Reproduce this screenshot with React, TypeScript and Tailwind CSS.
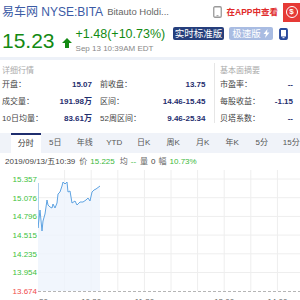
import React from 'react';

const tabs = ['分时', '5日', '年线', 'YTD', '日K', '周K', '月K', '年K', '5分', '15分'];

const quoteRows = [
  { a: '开盘：', av: '15.07', b: '前收盘：', bv: '13.75' },
  { a: '成交量：', av: '191.98万', b: '区间：', bv: '14.46-15.45' },
  { a: '10日均量：', av: '83.61万', b: '52周区间：', bv: '9.46-25.34' },
];

const basicRows = [
  { k: '市盈率：', v: '--' },
  { k: '每股收益：', v: '-1.15' },
  { k: '贝塔系数：', v: '--' },
];

const yTicks = ['15.357', '15.076', '14.796', '14.515', '14.235', '13.954', '13.674'];

// intraday points, already in plot coordinates
const pts: [number, number][] = [
  [0, 13], [0, 58], [2, 40], [4, 61], [5, 51], [7, 44], [9, 30], [10, 35], [12, 37],
  [14, 38], [15, 34], [17, 38], [19, 33], [20, 24], [22, 22], [24, 16], [25, 12],
  [27, 14], [29, 12], [30, 22], [32, 21], [34, 33], [37, 31], [39, 35], [42, 32],
  [45, 32], [48, 30], [50, 28], [52, 31], [54, 22], [56, 20], [58, 19], [62, 16],
];

const gridY = [9, 27.7, 46.4, 65.1, 83.8, 102.5];
const gridX = [26.6, 53.2, 79.8, 106.4, 133, 159.6, 186.2, 212.8, 239.4];
const xLabels: [string, number][] = [['09:30', 0], ['10:30', 53.2], ['11:30', 106.4], ['13:00', 186.2], ['14:00', 239.4]];

function PhoneIcon({ color, filled }: { color: string; filled?: boolean }) {
  return (
    <svg width="9" height="12" viewBox="0 0 9 12">
      <rect x="0.75" y="0.75" width="7.5" height="10.5" rx="1.2" fill={filled ? color : 'none'} stroke={color} strokeWidth="1.3" />
      {filled ? <rect x="2" y="2" width="5" height="6.5" fill="#fff" /> : null}
      <rect x="3.5" y="9.2" width="2" height="1" fill={filled ? '#fff' : color} />
    </svg>
  );
}

function IntradayChart() {
  const line = pts.map(([x, y]) => `${x},${y}`).join(' ');
  const area = `${line} 62,121 0,121`;
  return (
    <svg width="262" height="130" className="block">
      {gridY.map((y) => (
        <line key={y} x1="0" x2="262" y1={y} y2={y} stroke="#eeeeee" strokeWidth="1" />
      ))}
      {gridX.map((x) => (
        <line key={x} x1={x} x2={x} y1="0" y2="121" stroke="#eeeeee" strokeWidth="1" />
      ))}
      <polygon points={area} fill="#eef4fc" opacity="0.8" />
      <polyline points={line} fill="none" stroke="#5ea3e2" strokeWidth="1" />
      <line x1="0" x2="262" y1="121.5" y2="121.5" stroke="#b5b5b5" strokeWidth="1" strokeDasharray="3 2" />
      {xLabels.map(([t, x]) => (
        <text key={t} x={x} y="134" textAnchor="middle" fontSize="8" fill="#666" fontFamily="Liberation Sans, sans-serif">
          {t}
        </text>
      ))}
    </svg>
  );
}

export default function App() {
  return (
    <div className="w-[300px] h-[300px] overflow-hidden bg-white font-['Liberation_Sans','Noto_Sans_CJK_SC',sans-serif]">
      {/* title row */}
      <div className="flex h-[24px] items-center">
        <span className="ml-[2px] text-[12px] leading-none text-[#3b5ba5]">易车网 NYSE:BITA</span>
        <span className="ml-[4px] text-[9.5px] leading-none text-[#666]">Bitauto Holdi...</span>
        <div className="ml-auto flex items-center">
          <PhoneIcon color="#9a9a9a" />
          <span className="ml-[5px] text-[8.5px] font-bold leading-none text-[#e02a2a]">在APP中查看</span>
          <div className="ml-[5px] flex h-[19px] w-[17px] items-center justify-center bg-[#e63a36]">
            <span className="flex h-[12px] w-[12px] items-center justify-center rounded-full border border-white text-[8px] font-bold leading-none text-white">$</span>
          </div>
        </div>
      </div>

      {/* price row */}
      <div className="flex h-[33px] items-start">
        <span className="ml-[2px] mt-[6px] text-[21px] leading-[21px] text-[#138a13]">15.23</span>
        <svg className="ml-[7px] mt-[14px]" width="10" height="10" viewBox="0 0 10 10">
          <path d="M5 0 L10 5 L7 5 L7 10 L3 10 L3 5 L0 5 Z" fill="#138a13" />
        </svg>
        <div className="ml-[4px] flex flex-col">
          <span className="mt-[4px] text-[12.5px] leading-[12.5px] text-[#138a13]">+1.48(+10.73%)</span>
          <span className="mt-[4px] text-[8px] leading-[8px] text-[#888]">Sep 13 10:39AM EDT</span>
        </div>
        <div className="ml-auto mr-[12px] mt-[3px] flex items-center">
          <span className="flex h-[13px] w-[51px] items-center justify-center rounded-[2px] bg-[#263f7c] text-[9.5px] leading-none text-white">实时标准版</span>
          <span className="ml-[5px] flex h-[13px] w-[44px] items-center justify-center rounded-[2px] bg-[#a9bce2] text-[9.5px] leading-none text-white">
            极速版
            <svg className="ml-[2px]" width="7" height="9" viewBox="0 0 7 9">
              <path d="M4.5 0 L0.5 5 L3 5 L2 9 L6.5 3.5 L4 3.5 Z" fill="#fff" />
            </svg>
          </span>
          <span className="ml-[6px] flex">
            <PhoneIcon color="#2a4a9c" filled />
          </span>
        </div>
      </div>

      <div className="h-[3px] bg-[#edf1f8]" />

      {/* quote details */}
      <div className="flex h-[73px]">
        <div className="w-[214px]">
          <div className="mt-[7px] h-[8px] pl-[2px] text-[8px] leading-[8px] text-[#aaa]">详细行情</div>
          <div className="mt-[1.5px]">
            {quoteRows.map((r) => (
              <div key={r.a} className="flex h-[17px] items-center text-[8px] leading-none">
                <div className="flex w-[92px] justify-between pl-[2px]">
                  <span className="text-[#444]">{r.a}</span>
                  <span className="font-bold text-[#1f2e6e]">{r.av}</span>
                </div>
                <div className="ml-[8px] flex w-[105.5px] justify-between">
                  <span className="text-[#444]">{r.b}</span>
                  <span className="font-bold text-[#1f2e6e]">{r.bv}</span>
                </div>
              </div>
            ))}
          </div>
        </div>
        <div className="mt-[3px] h-[60px] w-px bg-[#e6e6e6]" />
        <div className="ml-[5px] w-[73px]">
          <div className="mt-[7px] h-[8px] text-[8px] leading-[8px] text-[#aaa]">基本面摘要</div>
          <div className="mt-[1.5px]">
            {basicRows.map((r) => (
              <div key={r.k} className="flex h-[17px] items-center justify-between text-[8px] leading-none">
                <span className="text-[#444]">{r.k}</span>
                <span className="font-bold text-[#1f2e6e]">{r.v}</span>
              </div>
            ))}
          </div>
        </div>
      </div>

      {/* period tabs */}
      <div className="flex h-[20px] bg-[#f0f3f9] pl-[11px]">
        {tabs.map((t, i) => (
          <div
            key={t}
            className={
              i === 0
                ? 'flex w-[29.5px] shrink-0 items-center justify-center border-t-2 border-[#1f2e6e] bg-white text-[8px] text-[#333]'
                : 'flex w-[29.5px] shrink-0 items-center justify-center text-[8px] text-[#555]'
            }
          >
            {t}
          </div>
        ))}
      </div>

      {/* info line */}
      <div className="flex h-[17px] items-center whitespace-nowrap pl-[5px] text-[8px] leading-none">
        <span className="text-[#444]">2019/09/13/五10:39</span>
        <span className="ml-[4px] text-[#666]">价</span>
        <span className="ml-[3px] text-[#3cb93c]">15.225</span>
        <span className="ml-[5px] text-[#666]">均</span>
        <span className="ml-[3px] text-[#3cb93c]">--</span>
        <span className="ml-[4px] text-[#666]">量</span>
        <span className="ml-[3px] text-[#444]">0</span>
        <span className="ml-[3px] text-[#666]">幅</span>
        <span className="ml-[3px] text-[#3cb93c]">10.73%</span>
      </div>

      {/* chart */}
      <div className="flex">
        <div className="flex w-[38px] flex-col pt-[0.6px]">
          {yTicks.map((t, i) => (
            <div
              key={t}
              className={
                i === yTicks.length - 1
                  ? 'flex h-[18.7px] items-center justify-end pr-[1px] text-[8px] text-[#f04a4a]'
                  : 'flex h-[18.7px] items-center justify-end pr-[1px] text-[8px] text-[#3cbf3c]'
              }
            >
              {t}
            </div>
          ))}
        </div>
        <div className="overflow-hidden">
          <IntradayChart />
        </div>
      </div>
    </div>
  );
}
